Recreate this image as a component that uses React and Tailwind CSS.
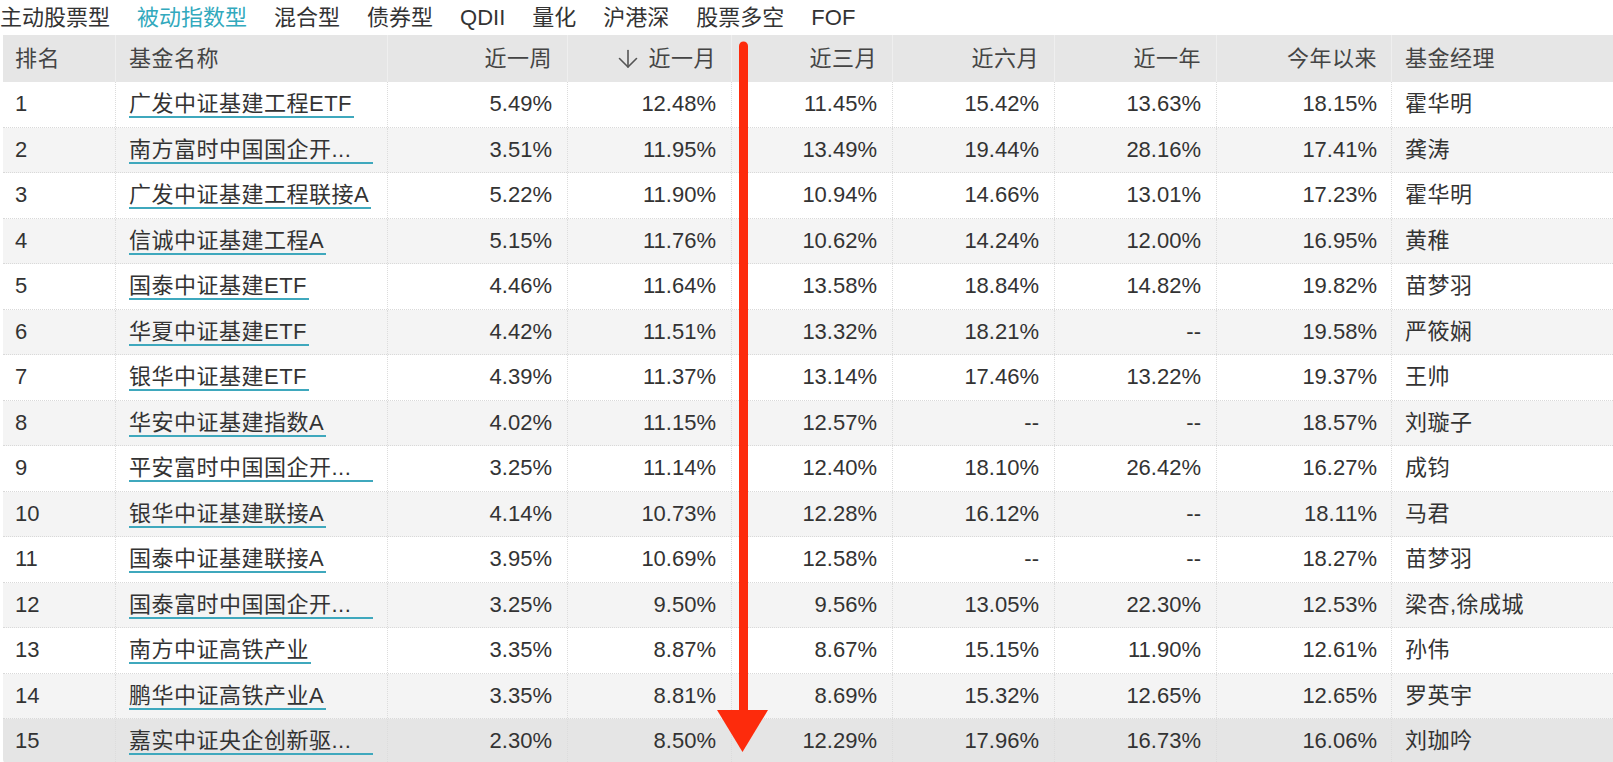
import React from "react";

const tabs = ["主动股票型", "被动指数型", "混合型", "债券型", "QDII", "量化", "沪港深", "股票多空", "FOF"];

const rows = [
  ["1", "广发中证基建工程ETF", false, "5.49%", "12.48%", "11.45%", "15.42%", "13.63%", "18.15%", "霍华明"],
  ["2", "南方富时中国国企开...", true, "3.51%", "11.95%", "13.49%", "19.44%", "28.16%", "17.41%", "龚涛"],
  ["3", "广发中证基建工程联接A", false, "5.22%", "11.90%", "10.94%", "14.66%", "13.01%", "17.23%", "霍华明"],
  ["4", "信诚中证基建工程A", false, "5.15%", "11.76%", "10.62%", "14.24%", "12.00%", "16.95%", "黄稚"],
  ["5", "国泰中证基建ETF", false, "4.46%", "11.64%", "13.58%", "18.84%", "14.82%", "19.82%", "苗梦羽"],
  ["6", "华夏中证基建ETF", false, "4.42%", "11.51%", "13.32%", "18.21%", "--", "19.58%", "严筱娴"],
  ["7", "银华中证基建ETF", false, "4.39%", "11.37%", "13.14%", "17.46%", "13.22%", "19.37%", "王帅"],
  ["8", "华安中证基建指数A", false, "4.02%", "11.15%", "12.57%", "--", "--", "18.57%", "刘璇子"],
  ["9", "平安富时中国国企开...", true, "3.25%", "11.14%", "12.40%", "18.10%", "26.42%", "16.27%", "成钧"],
  ["10", "银华中证基建联接A", false, "4.14%", "10.73%", "12.28%", "16.12%", "--", "18.11%", "马君"],
  ["11", "国泰中证基建联接A", false, "3.95%", "10.69%", "12.58%", "--", "--", "18.27%", "苗梦羽"],
  ["12", "国泰富时中国国企开...", true, "3.25%", "9.50%", "9.56%", "13.05%", "22.30%", "12.53%", "梁杏,徐成城"],
  ["13", "南方中证高铁产业", false, "3.35%", "8.87%", "8.67%", "15.15%", "11.90%", "12.61%", "孙伟"],
  ["14", "鹏华中证高铁产业A", false, "3.35%", "8.81%", "8.69%", "15.32%", "12.65%", "12.65%", "罗英宇"],
  ["15", "嘉实中证央企创新驱...", true, "2.30%", "8.50%", "12.29%", "17.96%", "16.73%", "16.06%", "刘珈吟"],
];

const grid = "grid grid-cols-[113px_272px_180px_164px_161px_162px_162px_175px_1fr]";

function DownArrow() {
  return (
    <svg width="24" height="20" viewBox="0 0 24 20" fill="none" stroke="#555" strokeWidth="1.6" strokeLinecap="round" strokeLinejoin="round">
      <path d="M12 1.5 V18" />
      <path d="M3.5 9.5 L12 18 L20.5 9.5" />
    </svg>
  );
}

export default function App() {
  return (
    <div
      className="relative w-[1613px] h-[762px] overflow-hidden bg-white text-[22px] text-[#333]"
      style={{ fontFamily: '"Liberation Sans", "Noto Sans CJK SC", sans-serif' }}
    >
      <div className="flex h-[35px] items-center gap-[27px] leading-none">
        {tabs.map((t, i) => (
          <span key={t} className={i === 1 ? "text-[#32a9bd]" : "text-[#333]"}>
            {t}
          </span>
        ))}
      </div>

      <div className="ml-[3px] rounded-bl-[6px] overflow-hidden">
        <div className={`${grid} h-[47px] items-stretch bg-[#e6e6e6] text-[#444] leading-none tracking-[0.5px]`}>
          <div className="flex items-center pl-[12px] border-r border-[#efefef]">排名</div>
          <div className="flex items-center pl-[13px] border-r border-[#efefef]">基金名称</div>
          <div className="flex items-center justify-end pr-[15px] border-r border-[#efefef]">近一周</div>
          <div className="flex items-center justify-end gap-[8px] pr-[15px] border-r border-[#efefef]">
            <DownArrow />
            <span>近一月</span>
          </div>
          <div className="flex items-center justify-end pr-[15px] border-r border-[#efefef]">近三月</div>
          <div className="flex items-center justify-end pr-[15px] border-r border-[#efefef]">近六月</div>
          <div className="flex items-center justify-end pr-[15px] border-r border-[#efefef]">近一年</div>
          <div className="flex items-center justify-end pr-[14px] border-r border-[#efefef]">今年以来</div>
          <div className="flex items-center pl-[13px]">基金经理</div>
        </div>

        {rows.map((r, idx) => {
          const bg = idx === 14 ? "bg-[#e5e5e5]" : idx % 2 === 1 ? "bg-[#f4f4f4]" : "bg-white";
          const num = "flex items-center justify-end pr-[15px] border-r border-dotted border-[#dcdcdc]";
          return (
            <div key={r[0]} className={`${grid} h-[45.5px] leading-none border-b border-dotted border-[#d9d9d9] ${bg}`}>
              <div className="flex items-center pl-[12px] border-r border-dotted border-[#dcdcdc]">{r[0]}</div>
              <div className="flex items-center pl-[13px] border-r border-dotted border-[#dcdcdc]">
                <span
                  className={`inline-block mt-[3px] whitespace-nowrap tracking-[0.5px] pb-[1px] border-b-2 border-[#3fa8bd] ${
                    r[2] ? "pr-[22px]" : "pr-[2px]"
                  }`}
                >
                  {r[1]}
                </span>
              </div>
              <div className={num}>{r[3]}</div>
              <div className={num}>{r[4]}</div>
              <div className={num}>{r[5]}</div>
              <div className={num}>{r[6]}</div>
              <div className={num}>{r[7]}</div>
              <div className="flex items-center justify-end pr-[14px] border-r border-dotted border-[#dcdcdc]">{r[8]}</div>
              <div className="flex items-center pl-[13px] tracking-[0.5px]">{r[9]}</div>
            </div>
          );
        })}
      </div>

      <svg className="absolute left-0 top-0 pointer-events-none" width="1613" height="762" viewBox="0 0 1613 762">
        <line x1="743.5" y1="46" x2="743.5" y2="712" stroke="#fd2b0c" strokeWidth="9" strokeLinecap="round" />
        <polygon points="717,710 768,710 742.5,752" fill="#fd2b0c" />
      </svg>
    </div>
  );
}
